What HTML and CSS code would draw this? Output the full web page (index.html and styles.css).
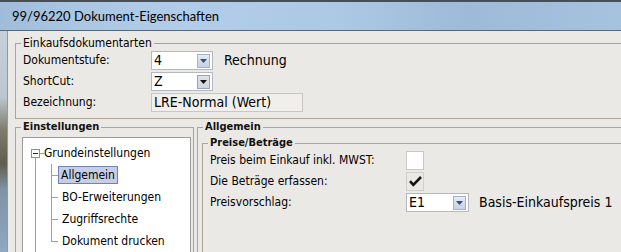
FILE: index.html
```html
<!DOCTYPE html>
<html lang="de">
<head>
<meta charset="utf-8">
<title>99/96220 Dokument-Eigenschaften</title>
<link rel="stylesheet" href="styles.css">
</head>
<body>
<div class="window">
  <div class="titlebar">99/96220 Dokument-Eigenschaften</div>
  <div class="frame">
    <div class="glass"></div>
    <div class="client">
      <fieldset class="group g-top">
        <legend class="lg lg-top">Einkaufsdokumentarten</legend>
        <div class="form form-top">
          <span class="lbl">Dokumentstufe:</span>
          <div class="ctl">
            <div class="combo"><span class="val">4</span><span class="dd"><svg width="7" height="4" viewBox="0 0 7 4"><polygon points="0,0 7,0 3.5,4" fill="#3a4d78"/></svg></span></div>
            <span class="big after">Rechnung</span>
          </div>
          <span class="lbl">ShortCut:</span>
          <div class="ctl">
            <div class="combo"><span class="val">Z</span><span class="dd dd-hot"><svg width="7" height="4" viewBox="0 0 7 4"><polygon points="0,0 7,0 3.5,4" fill="#111"/></svg></span></div>
          </div>
          <span class="lbl">Bezeichnung:</span>
          <div class="ctl">
            <div class="textbox"><span class="val">LRE-Normal (Wert)</span></div>
          </div>
        </div>
      </fieldset>
      <div class="lower">
        <fieldset class="group g-tree">
          <legend class="lg lg-bold lg-tree">Einstellungen</legend>
          <div class="tree">
            <div class="node-root"><span class="exp"><span class="minus"></span></span><span class="hl"></span><span class="ttext">Grundeinstellungen</span></div>
            <div class="rootline">
              <div class="children">
                <div class="child"><span class="ttext sel">Allgemein</span></div>
                <div class="child"><span class="ttext">BO-Erweiterungen</span></div>
                <div class="child"><span class="ttext">Zugriffsrechte</span></div>
                <div class="child last"><span class="ttext">Dokument drucken</span></div>
              </div>
            </div>
          </div>
        </fieldset>
        <fieldset class="group g-allg">
          <legend class="lg lg-bold lg-allg">Allgemein</legend>
          <fieldset class="group g-preise">
            <legend class="lg lg-bold lg-preise">Preise/Beträge</legend>
            <div class="form form-preise">
              <span class="lbl">Preis beim Einkauf inkl. MWST:</span>
              <div class="ctl"><span class="check"></span></div>
              <span class="lbl">Die Beträge erfassen:</span>
              <div class="ctl"><span class="check check-on"><svg width="16" height="17" viewBox="0 0 16 17"><path d="M3 8.2 L6.3 11.8 L14 4" fill="none" stroke="#151515" stroke-width="2.6" stroke-linejoin="miter"/></svg></span></div>
              <span class="lbl">Preisvorschlag:</span>
              <div class="ctl">
                <div class="combo combo-e1"><span class="val">E1</span><span class="dd"><svg width="7" height="4" viewBox="0 0 7 4"><polygon points="0,0 7,0 3.5,4" fill="#3a4d78"/></svg></span></div>
                <span class="big after2">Basis-Einkaufspreis 1</span>
              </div>
            </div>
          </fieldset>
        </fieldset>
      </div>
    </div>
  </div>
</div>
</body>
</html>
```

FILE: styles.css
```css
html, body {
  margin: 0;
  padding: 0;
  width: 621px;
  height: 252px;
  overflow: hidden;
  background: #ebe9e5;
}

.window {
  width: 621px;
  height: 252px;
  display: flex;
  flex-direction: column;
  font-family: "DejaVu Sans Condensed", "DejaVu Sans", sans-serif;
  font-stretch: condensed;
  font-size: 12px;
  color: #000;
}

.titlebar {
  height: 28px;
  flex: none;
  border-top: 2px solid #4a4d52;
  background: linear-gradient(90deg, #9fbcd9 0%, #a9c6e3 12%, #b1cde9 30%, #abc8e5 55%, #9dbad8 75%, #a5c2df 100%);
  padding-left: 12px;
  line-height: 28px;
  font-family: Lato, "Noto Sans", sans-serif;
  font-stretch: normal;
  font-size: 13px;
  color: #000;
}

.frame {
  flex: 1;
  display: flex;
  border-top: 1px solid #58687b;
  min-height: 0;
}

.glass {
  width: 7px;
  flex: none;
  border-right: 1px solid #8e9aa6;
  background: linear-gradient(180deg, #c6d0da 0%, #bcc6cf 30%, #7d7b6a 45%, #5f5d4c 60%, #7f93a8 72%, #8fa8c3 100%);
}

.client {
  flex: 1;
  min-width: 0;
  display: flex;
  flex-direction: column;
  padding: 5px 0 0 7px;
  background: #ebe9e5;
  min-height: 0;
}

.group {
  margin: 0;
  border: 1px solid #aca595;
  min-width: 0;
}

.lg {
  padding: 0 2px;
  line-height: 14px;
  height: 14px;
}

.lg-top {
  margin-left: -2px;
  font-size: 12px;
}

.lg-bold {
  font-weight: bold;
  font-size: 11px;
  color: #111;
}

.g-top {
  flex: none;
  padding: 1px 0 6px 7px;
  border-right: none;
}

.form {
  display: grid;
  grid-auto-rows: 19px;
  row-gap: 2px;
  align-items: center;
}

.form-top {
  grid-template-columns: 128px auto;
}

.lbl {
  line-height: 19px;
  white-space: nowrap;
}

.ctl {
  display: flex;
  align-items: center;
  height: 19px;
}

.combo {
  box-sizing: border-box;
  width: 62px;
  height: 19px;
  border: 1px solid #b3b9c2;
  background: #fff;
  display: flex;
  align-items: center;
  justify-content: space-between;
  padding: 0 2px 0 2px;
}

.combo-e1 {
  width: 63px;
}

.val {
  font-size: 14px;
  line-height: 17px;
  white-space: nowrap;
}

.dd {
  box-sizing: border-box;
  width: 13px;
  height: 14px;
  border: 1px solid #a3b2cd;
  background: linear-gradient(180deg, #e6ecf6 0%, #d3dcec 50%, #c6d2e7 100%);
  display: flex;
  align-items: center;
  justify-content: center;
}

.dd-hot {
  border-color: #9aa3b3;
  background: linear-gradient(180deg, #dfe3ea 0%, #cfd4de 100%);
}

.dd svg {
  display: block;
}

.big {
  font-size: 14px;
  line-height: 19px;
  white-space: nowrap;
}

.after {
  margin-left: 11px;
}

.after2 {
  margin-left: 10px;
}

.textbox {
  box-sizing: border-box;
  width: 152px;
  height: 19px;
  border: 1px solid #c9c7c0;
  background: #f0efeb;
  padding-left: 2px;
  display: flex;
  align-items: center;
}

.lower {
  flex: 1;
  display: flex;
  margin-top: 1px;
  min-height: 0;
}

.g-tree {
  box-sizing: border-box;
  width: 179px;
  flex: none;
  padding: 3px 2px 0 6px;
  border-bottom: none;
  display: flex;
  flex-direction: column;
}

.lg-tree {
  margin-left: -1px;
}

.tree {
  flex: 1;
  min-height: 0;
  display: flex;
  flex-direction: column;
  background: #fff;
  border: 1px solid #9c9c9c;
  border-bottom: none;
  padding: 4px 0 0 8px;
}

.node-root {
  flex: none;
  height: 22px;
  display: flex;
  align-items: center;
  background: linear-gradient(#a0a0a0, #a0a0a0) 4px 16px / 1px 6px no-repeat;
}

.exp {
  box-sizing: border-box;
  width: 9px;
  height: 9px;
  border: 1px solid #8f8f8f;
  background: #fff;
  display: flex;
  align-items: center;
  justify-content: center;
}

.minus {
  width: 5px;
  height: 1px;
  background: #222;
}

.hl {
  width: 4px;
  height: 1px;
  background: #a0a0a0;
}

.ttext {
  line-height: 16px;
  padding: 0 3px;
  white-space: nowrap;
  border: 1px solid transparent;
}

.node-root .ttext {
  padding: 0;
  border: none;
}

.rootline {
  flex: 1;
  min-height: 0;
  margin-left: 4px;
  border-left: 1px solid #a0a0a0;
}

.children {
  margin-left: 15px;
}

.child {
  height: 22px;
  display: flex;
  align-items: center;
  padding-left: 7px;
  background:
    linear-gradient(#a0a0a0, #a0a0a0) 0 0 / 1px 100% no-repeat,
    linear-gradient(#a0a0a0, #a0a0a0) 0 11px / 7px 1px no-repeat;
}

.child.last {
  background-size: 1px 12px, 7px 1px;
}

.ttext.sel {
  padding: 0 2px;
  background: #c6cde6;
  border: 1px solid #6f83b8;
}

.g-allg {
  flex: 1;
  margin-left: 3px;
  padding: 2px 0 0 4px;
  border-right: none;
  border-bottom: none;
  display: flex;
  flex-direction: column;
}

.lg-allg {
  margin-left: 1px;
}

.g-preise {
  flex: 1;
  min-height: 0;
  padding: 1px 0 0 7px;
  border-right: none;
  border-bottom: none;
}

.lg-preise {
  margin-left: -2px;
}

.form-preise {
  grid-template-columns: 196px auto;
}

.check {
  box-sizing: border-box;
  width: 18px;
  height: 19px;
  border: 1px solid #cac7c0;
  background: #fff;
  display: flex;
  align-items: center;
  justify-content: center;
}

.check-on {
  background: #ebe9e5;
  border-color: #d2cfc8;
}

.check svg {
  display: block;
}
```
